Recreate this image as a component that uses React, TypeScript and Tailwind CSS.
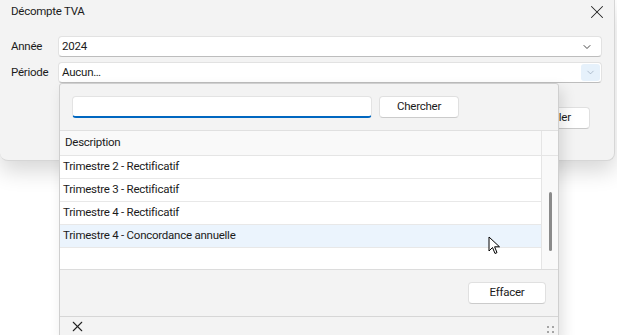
import { X, ChevronDown } from "lucide-react"

const rows = [
  "Trimestre 2 - Rectificatif",
  "Trimestre 3 - Rectificatif",
  "Trimestre 4 - Rectificatif",
  "Trimestre 4 - Concordance annuelle",
]

function Cursor() {
  return (
    <svg width="14" height="20" viewBox="0 0 14 20" className="absolute left-[488px] top-[236px]">
      <path d="M1 1 L1 15 L4.5 11.5 L7 17.5 L9 16.6 L6.6 10.8 L11.5 10.8 Z" fill="#fff" stroke="#000" strokeWidth="1" strokeLinejoin="round" />
    </svg>
  )
}

export default function App() {
  const selected = 3

  return (
    <div className="relative w-[617px] h-[335px] overflow-hidden bg-white font-['Roboto',sans-serif] text-[11.5px] tracking-[-0.25px] text-[#1b1b1b]">
      {/* main dialog */}
      <div className="w-[615px] h-[161px] bg-[#f3f3f3] rounded-b-[8px] border-b border-r border-[#d6d6d6] shadow-[0_10px_22px_rgba(0,0,0,0.16)] flex flex-col">
        <div className="h-[30px] flex items-start justify-between pl-[11px] pr-[6px] pt-[2px]">
          <span className="leading-[18px]">Décompte TVA</span>
          <X size={22} strokeWidth={1.1} className="-mt-[1px] text-[#222]" />
        </div>

        <div className="mt-[6px] flex items-center pr-[12px]">
          <span className="w-[58px] pl-[11px]">Année</span>
          <div className="flex-1 h-[21px] bg-white rounded-[4px] border border-[#e2e2e2] border-b-[#bdbdbd] flex items-center justify-between pl-[3px] pr-[8px]">
            <span>2024</span>
            <ChevronDown size={12} strokeWidth={1.8} className="text-[#333]" />
          </div>
        </div>

        <div className="mt-[5px] flex items-center pr-[12px]">
          <span className="w-[58px] pl-[11px]">Période</span>
          <div className="flex-1 h-[21px] bg-white rounded-[4px] border border-[#e2e2e2] border-b-[#bdbdbd] flex items-center justify-between pl-[3px] pr-[1px]">
            <span>Aucun…</span>
            <div className="w-[19px] h-[17px] rounded-[3px] bg-[#e6f1fb] flex items-center justify-center">
              <ChevronDown size={11} strokeWidth={1.3} className="text-[#8a9bb0]" />
            </div>
          </div>
        </div>

        <div className="mt-[24px] flex justify-end pr-[24px] gap-[8px]">
          <button className="w-[78px] h-[22px] bg-white rounded-[4px] border border-[#e0e0e0] border-b-[#c9c9c9]">Calculer</button>
          <button className="w-[80px] h-[22px] bg-white rounded-[4px] border border-[#e0e0e0] border-b-[#c9c9c9] pl-[4px]">Annuler</button>
        </div>
      </div>

      {/* dropdown popup */}
      <div className="absolute left-[59px] top-[83px] w-[500px] h-[256px] bg-[#f3f3f3] border border-[#cfcfcf] rounded-[3px] shadow-[4px_6px_14px_rgba(0,0,0,0.12)] flex flex-col">
        <div className="h-[46px] flex items-start pl-[12px] pt-[12px] gap-[7px]">
          <div className="w-[300px] h-[22px] bg-white rounded-[4px] border border-[#e3e3e3] border-b-2 border-b-[#0067c0]" />
          <button className="w-[80px] h-[22px] bg-white rounded-[4px] border border-[#e0e0e0] border-b-[#cbcbcb]">Chercher</button>
        </div>

        <div className="h-[139px] flex border-t border-[#e0e0e0] bg-white">
          <div className="flex-1 flex flex-col">
            <div className="h-[25px] bg-[#f9f9f9] border-b border-[#e5e5e5] flex items-center pl-[5px]">Description</div>
            {rows.map((r, i) => (
              <div
                key={r}
                className={`h-[23px] border-b border-[#e8e8e8] flex items-center pl-[3px] ${i === selected ? "bg-[#ebf4fd]" : "bg-white"}`}
              >
                {r}
              </div>
            ))}
          </div>
          <div className="w-[17px] bg-[#f9f9f9] border-l border-[#e5e5e5] flex flex-col">
            <div className="h-[25px] border-b border-[#e5e5e5]" />
            <div className="flex-1 relative">
              <div className="absolute left-[7px] top-[36px] w-[3px] h-[59px] rounded-full bg-[#8a8a8a]" />
            </div>
          </div>
        </div>

        <div className="h-[47px] border-t border-[#dcdcdc] flex items-start justify-end pr-[12px] pt-[12px]">
          <button className="w-[78px] h-[22px] bg-white rounded-[4px] border border-[#e0e0e0] border-b-[#cbcbcb]">Effacer</button>
        </div>

        <div className="flex-1 border-t border-[#d6d6d6] flex items-start justify-between pl-[9px] pr-[3px]">
          <X size={17} strokeWidth={1.5} className="mt-[1px] text-[#222]" />
          <svg width="8" height="8" viewBox="0 0 8 8" className="mt-[9px]">
            <rect x="0" y="0" width="2" height="2" fill="#a5a5a5" />
            <rect x="5" y="0" width="2" height="2" fill="#a5a5a5" />
            <rect x="0" y="5" width="2" height="2" fill="#a5a5a5" />
            <rect x="5" y="5" width="2" height="2" fill="#a5a5a5" />
          </svg>
        </div>
      </div>

      <Cursor />
    </div>
  )
}
